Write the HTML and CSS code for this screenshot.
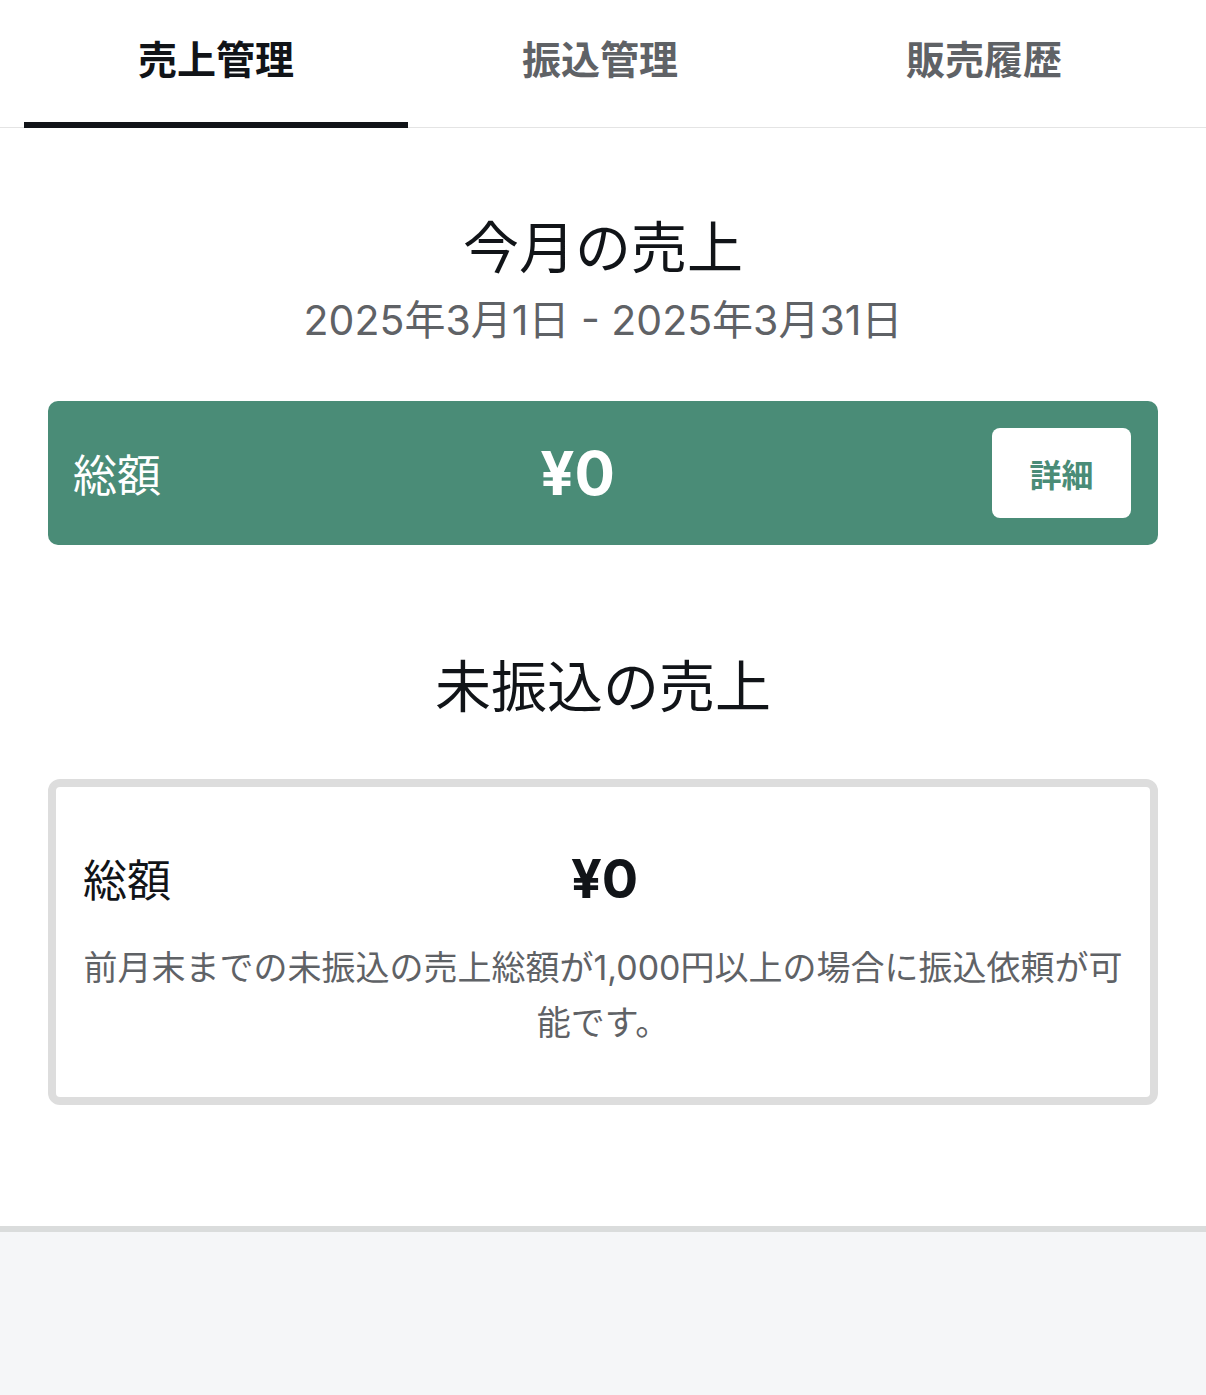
FILE: index.html
```html
<!DOCTYPE html>
<html lang="ja">
<head>
    <meta charset="UTF-8">
    <meta name="viewport" content="width=device-width, initial-scale=1.0">
    <title>売上管理</title>
    <link rel="stylesheet" href="styles.css">
</head>
<body>
    <nav class="tabs">
        <div class="tab activo">売上管理</div>
        <div class="tab">振込管理</div>
        <div class="tab">販売履歴</div>
    </nav>

    <main class="contenido">
        <section class="seccion">
            <h2 class="titulo">今月の売上</h2>
            <p class="periodo">2025年3月1日 - 2025年3月31日</p>
            <div class="total-mes">
                <span class="etiqueta">総額</span>
                <span class="monto">¥0</span>
                <button class="boton-detalle">詳細</button>
            </div>
        </section>

        <section class="seccion">
            <h2 class="titulo titulo-grande">未振込の売上</h2>
            <div class="tarjeta">
                <div class="fila">
                    <span class="etiqueta">総額</span>
                    <span class="monto">¥0</span>
                </div>
                <p class="nota">前月末までの未振込の売上総額が1,000円以上の場合に振込依頼が可能です。</p>
            </div>
        </section>
    </main>

    <footer class="pie"></footer>
</body>
</html>
```

FILE: styles.css
```css
body {
    font-family: "Inter", "Noto Sans CJK JP", sans-serif;
    margin: 0;
    background-color: #f5f6f8;
    color: #111418;
}
.tabs {
    display: flex;
    padding: 0 30px 0 24px;
    height: 127px;
    background-color: white;
    border-bottom: 1px solid #e4e4e4;
}
.tab {
    flex: 1;
    display: flex;
    justify-content: center;
    align-items: center;
    padding-bottom: 8px;
    font-size: 39px;
    font-weight: bold;
    color: #5f6266;
    border-bottom: 6px solid transparent;
    margin-bottom: -1px;
}
.tab.activo {
    color: #111418;
    border-bottom-color: #111418;
}
.contenido {
    background-color: white;
    padding: 86px 48px 121px;
    border-bottom: 6px solid #dadcdc;
}
.seccion {
    text-align: center;
}
.titulo {
    font-size: 56px;
    font-weight: normal;
    margin: 0;
    line-height: 68px;
}
.titulo-grande {
    margin-bottom: 58px;
}
.periodo {
    font-size: 41px;
    color: #5f6266;
    margin: 13px 0 56px;
    line-height: 50px;
}
.total-mes {
    display: flex;
    align-items: center;
    justify-content: space-between;
    background-color: #4a8c77;
    border-radius: 10px;
    padding: 0 27px 0 25px;
    height: 144px;
    color: white;
    margin-bottom: 108px;
}
.total-mes .etiqueta {
    font-size: 44px;
}
.total-mes .monto {
    font-size: 60px;
    font-weight: bold;
    margin-left: 2px;
}
.boton-detalle {
    font-family: inherit;
    background-color: white;
    color: #4a8c77;
    border: none;
    border-radius: 8px;
    width: 139px;
    height: 90px;
    font-size: 32px;
    font-weight: bold;
}
.tarjeta {
    border: 8px solid #dddddd;
    border-radius: 12px;
    padding: 55px 22px 47px;
}
.fila {
    display: flex;
    align-items: center;
    height: 72px;
    padding-left: 5px;
}
.fila .etiqueta {
    font-size: 44px;
    width: 488px;
    text-align: left;
}
.fila .monto {
    font-size: 54px;
    font-weight: bold;
}
.nota {
    font-size: 34px;
    color: #5f6266;
    line-height: 55px;
    margin: 26px 0 0;
}
.pie {
    height: 163px;
}
```
